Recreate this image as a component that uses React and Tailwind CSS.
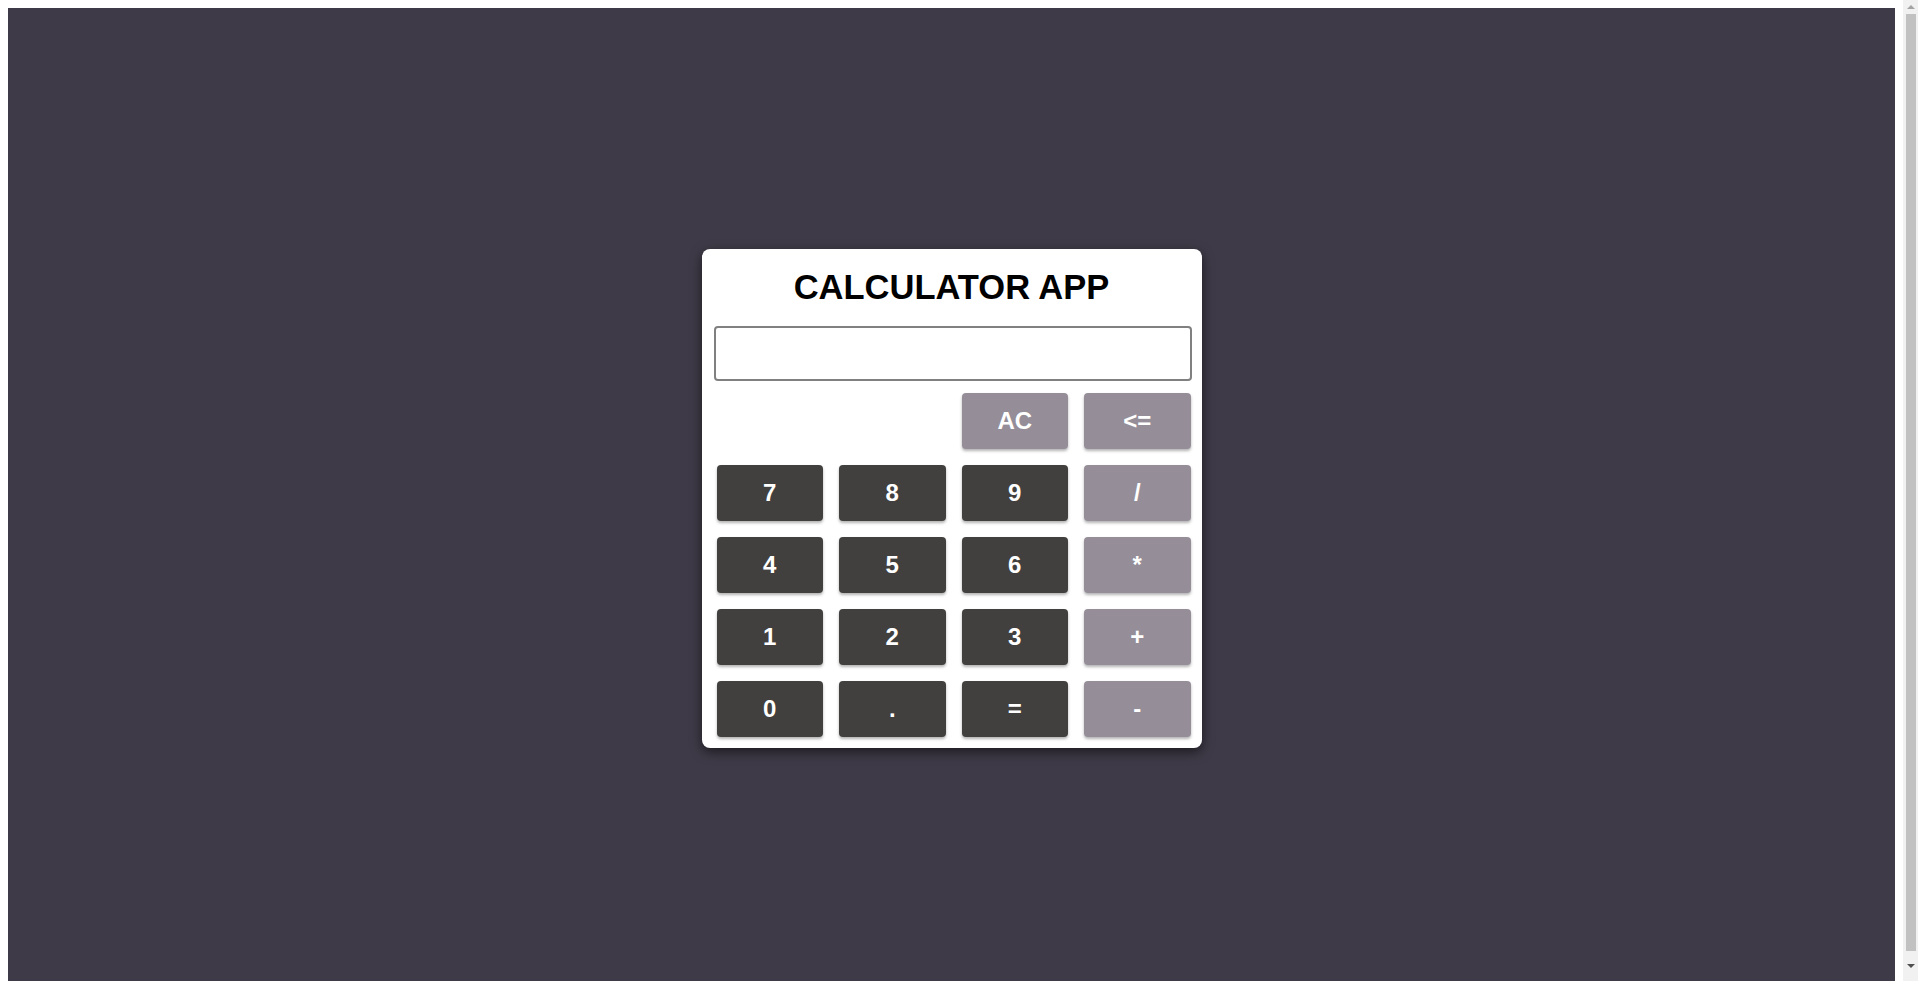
import React from "react";

const dark = "bg-[#42403e]";
const light = "bg-[#958e98]";

const rows = [
  [null, null, { t: "AC", c: light }, { t: "<=", c: light }],
  [{ t: "7", c: dark }, { t: "8", c: dark }, { t: "9", c: dark }, { t: "/", c: light }],
  [{ t: "4", c: dark }, { t: "5", c: dark }, { t: "6", c: dark }, { t: "*", c: light }],
  [{ t: "1", c: dark }, { t: "2", c: dark }, { t: "3", c: dark }, { t: "+", c: light }],
  [{ t: "0", c: dark }, { t: ".", c: dark }, { t: "=", c: dark }, { t: "-", c: light }],
];

function FakeScrollbar() {
  return (
    <div className="fixed top-0 right-0 w-[15px] h-screen bg-[#f1f1f1] flex flex-col items-center">
      <div className="h-[14px] w-full flex items-center justify-center">
        <div className="w-0 h-0 border-l-[4px] border-r-[4px] border-b-[4px] border-l-transparent border-r-transparent border-b-[#a3a3a3]" />
      </div>
      <div className="flex-1 w-[10px] bg-[#c1c1c1] ml-[1px]" />
      <div className="h-[30px] w-full flex items-center justify-center">
        <div className="w-0 h-0 border-l-[4px] border-r-[4px] border-t-[4px] border-l-transparent border-r-transparent border-t-[#505050]" />
      </div>
    </div>
  );
}

export default function App() {
  return (
    <div className="pt-2 pb-2 pl-2 pr-[23px] bg-white" style={{ fontFamily: '"Liberation Sans", Arial, sans-serif' }}>
      <div className="h-screen bg-[#3e3a47] flex items-center justify-center">
        <div className="w-[500px] bg-white rounded-lg shadow-[0_4px_12px_rgba(0,0,0,0.55)] pt-[19px] pb-[11px] flex flex-col">
          <h1 className="text-center text-[34.5px] leading-[38px] font-bold text-black mb-[20px]">
            CALCULATOR APP
          </h1>
          <input
            type="text"
            className="mx-[12px] w-[478px] h-[55px] border-2 border-[#808080] rounded-[4px] outline-none px-2 text-2xl"
          />
          <div className="mt-[12px] ml-[15px] w-[474px] grid grid-cols-4 gap-4">
            {rows.flat().map((b, i) =>
              b ? (
                <button
                  key={i}
                  className={`${b.c} h-[56px] rounded-[4px] text-white text-[24px] font-bold flex items-center justify-center shadow-[0_2px_3px_rgba(0,0,0,0.3)]`}
                >
                  {b.t}
                </button>
              ) : (
                <div key={i} className="h-[56px]" />
              )
            )}
          </div>
        </div>
      </div>
      <FakeScrollbar />
    </div>
  );
}
